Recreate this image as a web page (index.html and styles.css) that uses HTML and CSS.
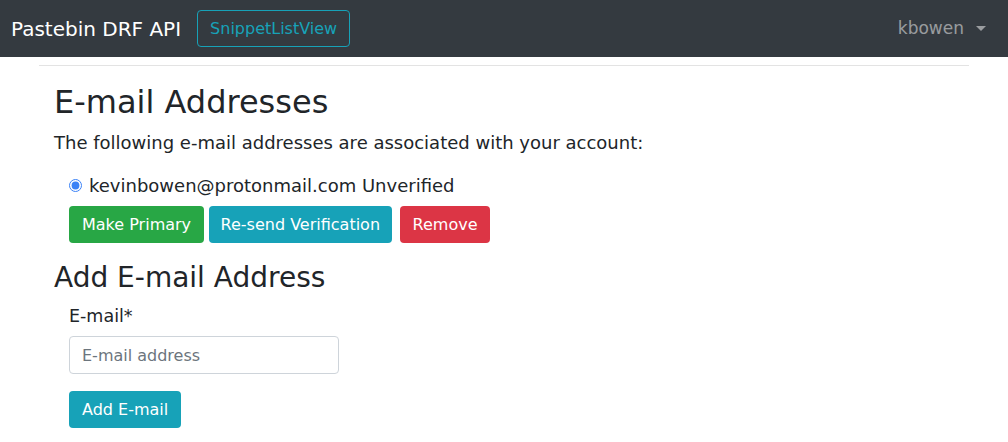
FILE: index.html
```html
<!DOCTYPE html>
<html lang="en">
<head>
    <meta charset="UTF-8">
    <meta name="viewport" content="width=device-width, initial-scale=1.0">
    <title>E-mail Addresses</title>
    <link rel="stylesheet" href="styles.css">
</head>
<body>
    <nav class="navbar">
        <a class="brand" href="#">Pastebin DRF API</a>
        <a class="btn-outline" href="#">SnippetListView</a>
        <div class="user-menu">
            <span class="user-name">kbowen</span>
            <span class="caret"></span>
        </div>
    </nav>
    <div class="container">
        <hr class="rule">
        <div class="content">
            <h2 class="title">E-mail Addresses</h2>
            <p class="lead">The following e-mail addresses are associated with your account:</p>
            <form class="email-list">
                <label class="email-item">
                    <input type="radio" name="email" checked>
                    <span>kevinbowen@protonmail.com Unverified</span>
                </label>
                <div class="actions">
                    <button type="button" class="btn btn-green">Make Primary</button>
                    <button type="button" class="btn btn-teal btn-resend">Re-send Verification</button>
                    <button type="button" class="btn btn-red">Remove</button>
                </div>
            </form>
            <h3 class="title title-add">Add E-mail Address</h3>
            <form class="add-form">
                <label class="field-label" for="email">E-mail*</label>
                <input type="email" id="email" class="field" placeholder="E-mail address">
                <div>
                    <button type="button" class="btn btn-teal">Add E-mail</button>
                </div>
            </form>
        </div>
    </div>
</body>
</html>
```

FILE: styles.css
```css
body {
    margin: 0;
    font-family: 'DejaVu Sans', 'Liberation Sans', sans-serif;
    font-size: 16px;
    line-height: 1.5;
    color: #212529;
    background: #fff;
}
.navbar {
    display: flex;
    align-items: center;
    height: 57px;
    box-sizing: border-box;
    padding: 0 16px 0 11px;
    background: #343a40;
}
.brand {
    color: #fff;
    font-size: 20px;
    text-decoration: none;
    margin-right: 16px;
}
.btn-outline {
    display: inline-block;
    color: #17a2b8;
    border: 1px solid #17a2b8;
    border-radius: 4px;
    padding: 5.5px 12px;
    font-size: 16px;
    line-height: 24px;
    text-decoration: none;
}
.user-menu {
    margin-left: auto;
    display: flex;
    align-items: center;
    color: rgba(255, 255, 255, 0.5);
    font-size: 17px;
    padding-right: 6px;
}
.caret {
    display: inline-block;
    margin-left: 12px;
    border-top: 5px solid rgba(255, 255, 255, 0.5);
    border-left: 5px solid transparent;
    border-right: 5px solid transparent;
}
.container {
    width: 930px;
    margin: 0 auto;
}
.rule {
    margin: 8px 0 0;
    border: 0;
    border-top: 1px solid #e3e3e3;
}
.content {
    padding: 0 15px;
}
.title {
    margin: 17px 0 8px;
    font-size: 32px;
    font-weight: 500;
    line-height: 1.2;
}
.lead {
    margin: 0 0 16px;
    font-size: 18px;
}
.email-list {
    padding-left: 15px;
}
.email-item {
    display: flex;
    align-items: center;
    font-size: 18px;
    margin-bottom: 7px;
}
.email-item input {
    margin: 0 7px 0 0;
    width: 13px;
    height: 13px;
    accent-color: #3b82f6;
}
.actions {
    display: flex;
    gap: 5px;
}
.btn {
    font-family: inherit;
    font-size: 16px;
    line-height: 24px;
    padding: 5.5px 12px;
    border: 1px solid transparent;
    border-radius: 4px;
    color: #fff;
    cursor: pointer;
}
.btn-green {
    background: #28a745;
}
.btn-teal {
    background: #17a2b8;
}
.btn-resend {
    padding-left: 10.5px;
    padding-right: 10.5px;
}
.btn-red {
    background: #dc3545;
    margin-left: 3px;
}
.title-add {
    margin: 18px 0 8px;
    font-size: 28px;
}
.add-form {
    display: flex;
    flex-direction: column;
    align-items: flex-start;
    padding-left: 15px;
}
.field-label {
    margin: 0 0 7px;
    font-size: 17.5px;
}
.field {
    width: 270px;
    height: 38px;
    box-sizing: border-box;
    padding: 6px 12px;
    font-family: inherit;
    font-size: 16px;
    border: 1px solid #ced4da;
    border-radius: 4px;
    margin-bottom: 17px;
}
.field::placeholder {
    color: #6c757d;
}
```
